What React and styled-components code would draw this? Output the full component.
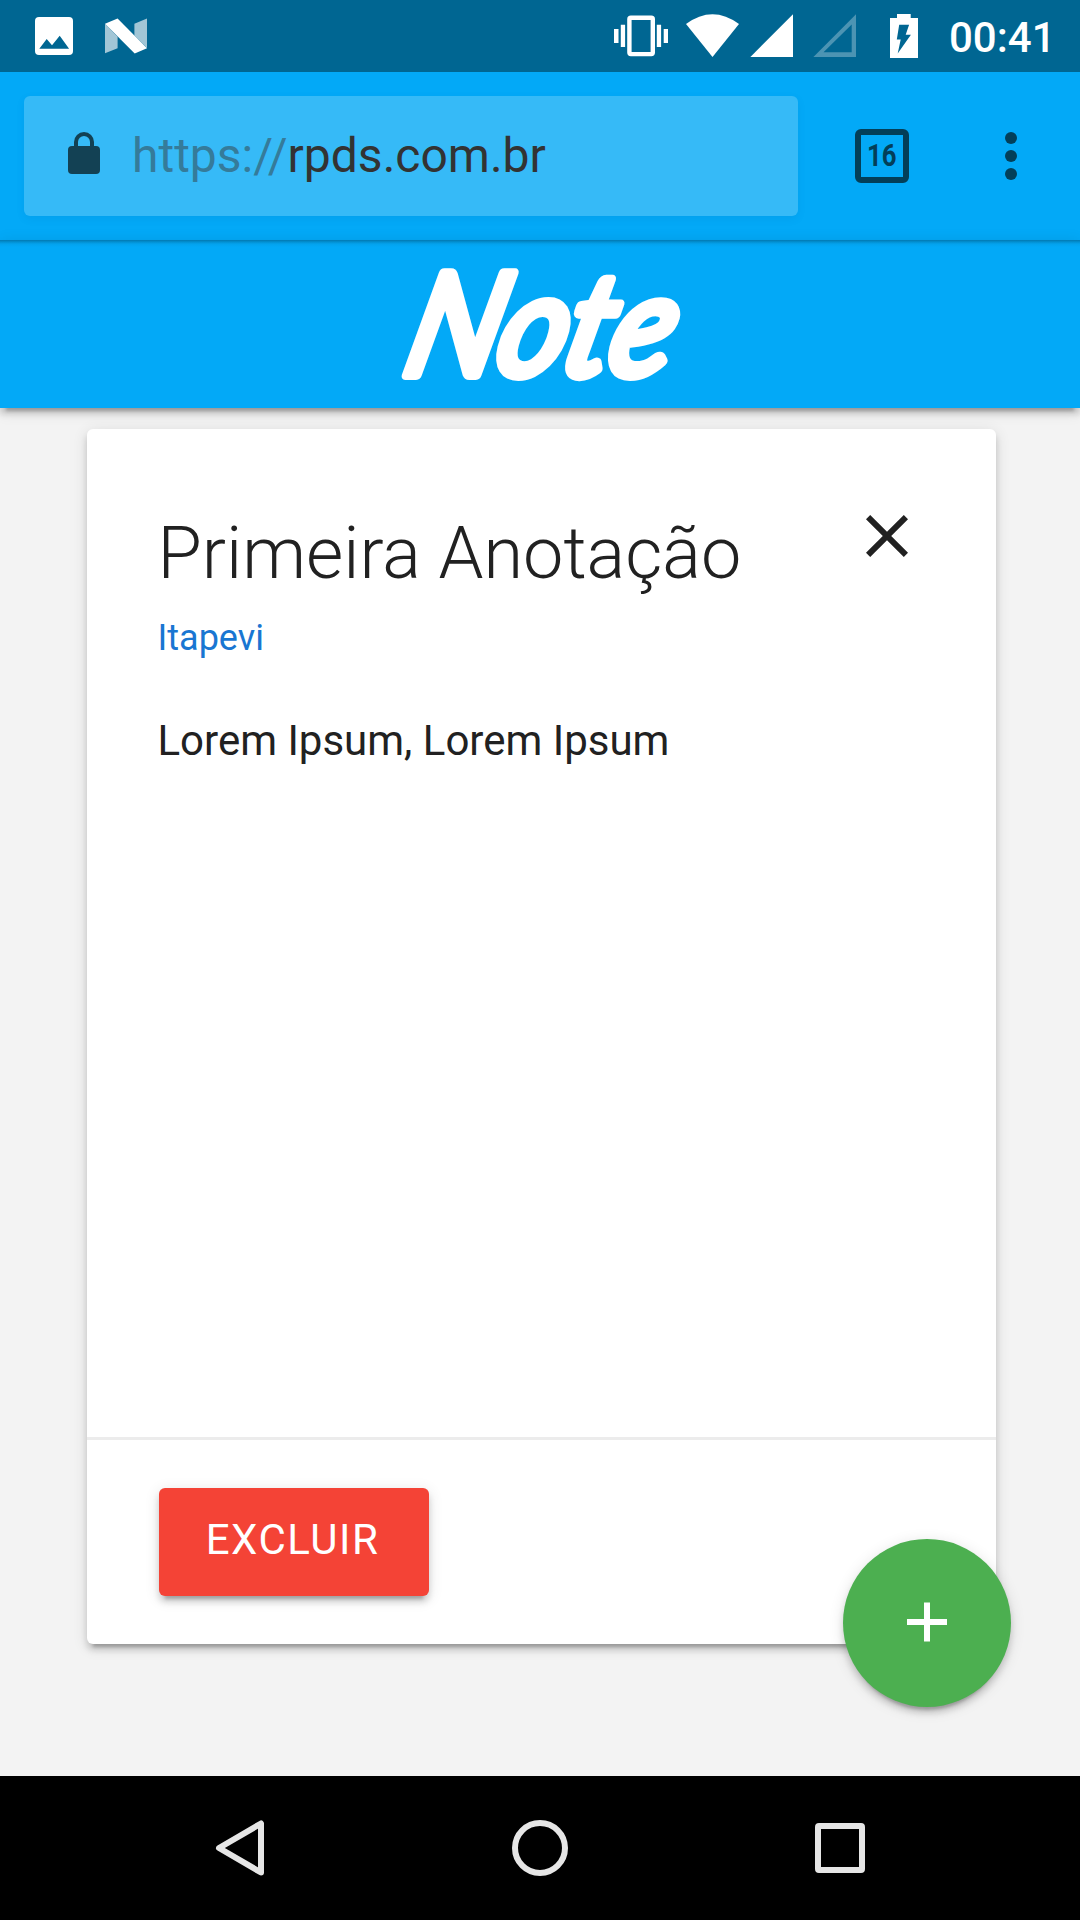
import React from "react";
import styled, { createGlobalStyle, css } from "styled-components";

const GlobalStyle = createGlobalStyle`
  *, *::before, *::after { box-sizing: border-box; }
  body { margin: 0; background: #f3f3f3; }
  h1, h2, p { margin: 0; }
  svg { display: block; flex: none; }
`;

const elevation = css`
  box-shadow: 0 6px 6px 0 rgba(0, 0, 0, 0.14), 0 3px 15px 0 rgba(0, 0, 0, 0.12),
    0 9px 3px -6px rgba(0, 0, 0, 0.2);
`;

const Screen = styled.div`
  position: relative;
  display: flex;
  flex-direction: column;
  width: 1080px;
  height: 1920px;
  overflow: hidden;
  background: #f3f3f3;
  color: #212121;
  font-family: Roboto, "Liberation Sans", sans-serif;
`;

const StatusBar = styled.div`
  display: flex;
  justify-content: space-between;
  height: 72px;
  padding: 0 27px 0 35px;
  background: #006692;
`;

const StatusGroup = styled.div`
  display: flex;
  align-items: center;
  gap: ${(p) => p.$gap}px;
`;

const Clock = styled.span`
  width: 104px;
  padding-top: 3px;
  margin-left: 13px;
  color: #fff;
  font-size: 42px;
  font-weight: 500;
  line-height: 72px;
  white-space: nowrap;
`;

const BrowserBar = styled.div`
  display: flex;
  align-items: center;
  height: 168px;
  padding: 0 63px 0 24px;
  background: #03a9f7;
`;

const AddressField = styled.div`
  display: flex;
  align-items: center;
  gap: 32px;
  width: 774px;
  height: 120px;
  padding-left: 44px;
  border-radius: 6px;
  background: #36baf7;
  box-shadow: 0 3px 8px rgba(0, 70, 130, 0.08);
`;

const Url = styled.span`
  color: #333;
  font-size: 48px;
  line-height: 56px;
  white-space: nowrap;
`;

const Scheme = styled.span`
  color: #357b9a;
`;

const TabCount = styled.div`
  display: flex;
  align-items: center;
  justify-content: center;
  width: 54px;
  height: 54px;
  margin: 0 96px 0 57px;
  border: 6px solid #033f59;
  border-radius: 6px;
  color: #033f59;
`;

const TabNumber = styled.span`
  font-size: 31px;
  font-weight: 700;
  line-height: 36px;
  transform: scaleX(0.83);
`;

const AppHeader = styled.header`
  position: relative;
  display: flex;
  align-items: center;
  justify-content: center;
  flex: none;
  height: 168px;
  background: linear-gradient(#0278b0 0, #0290d2 2px, #03a2ed 4px, #03a9f7 7px);
  ${elevation}
`;

const Brand = styled.svg`
  overflow: visible;
`;

const BrandText = styled.text`
  fill: #fff;
  stroke: #fff;
  stroke-width: 10px;
  stroke-linejoin: round;
  font-family: Lato, sans-serif;
  font-size: 142px;
  font-weight: 400;
  font-style: italic;
`;

const Main = styled.main`
  flex: 1;
  padding: 21px 84px 0 87px;
`;

const Card = styled.article`
  display: flex;
  flex-direction: column;
  height: 1215px;
  border-radius: 6px;
  background: #fff;
  ${elevation}
`;

const CardBody = styled.div`
  flex: 1;
  padding: 71px 73.5px 0 70.5px;
`;

const TitleRow = styled.div`
  display: flex;
  justify-content: space-between;
  height: 111px;
`;

const Title = styled.h2`
  padding-top: 12px;
  font-size: 72px;
  font-weight: 300;
  line-height: 84px;
  white-space: nowrap;
`;

const Place = styled.p`
  color: #1976d2;
  font-size: 36px;
  line-height: 54px;
`;

const NoteText = styled.p`
  margin-top: 44px;
  font-size: 42px;
  line-height: 63px;
`;

const CardActions = styled.footer`
  height: 207px;
  padding: 48px 72px;
  border-top: 3px solid #ececec;
`;

const DeleteButton = styled.button`
  display: block;
  width: 270px;
  height: 108px;
  padding: 0 3px 4px 0;
  border: 0;
  border-radius: 6px;
  background: #f44336;
  color: #fff;
  font: 400 42px/104px Roboto, sans-serif;
  letter-spacing: 1.5px;
  ${elevation}
`;

const AddButton = styled.button`
  position: absolute;
  right: 69px;
  bottom: 213px;
  display: flex;
  align-items: center;
  justify-content: center;
  width: 168px;
  height: 168px;
  padding: 0 0 2px;
  border: 0;
  border-radius: 50%;
  background: #4caf50;
  ${elevation}
`;

const NavBar = styled.nav`
  display: flex;
  align-items: center;
  justify-content: space-between;
  flex: none;
  height: 144px;
  padding: 0 215px;
  background: #000;
`;

const PhotoIcon = () => (
  <svg width="38" height="72" viewBox="35 0 38 72">
    <rect x="35" y="17" width="38" height="38" rx="4" fill="#fff" />
    <path d="M39.3 48.7l7.4-9.6 5.3 6.2 7.7-9.5 9.4 12.9z" fill="#006692" />
  </svg>
);

const NougatIcon = () => (
  <svg width="42" height="72" viewBox="105 0 42 72">
    <path d="M105 23.7l12.6 13v11.6L105 53.3zM134.4 23.8L147 18.4V48l-12.6-12.4z" fill="#a2c6d6" />
    <path d="M105 23.7l12.6-5.3L147 48.2l-12.3 5.3z" fill="#fff" />
  </svg>
);

const VibrateIcon = () => (
  <svg width="54" height="72" viewBox="614 0 54 72" fill="#fff">
    <path d="M614 29h4.5v14H614zM620.8 24.8h4.3V47h-4.3zM656.8 24.8h4.3V47h-4.3zM663.7 29h4.3v14h-4.3z" />
    <rect x="629.4" y="17.7" width="23.4" height="36.4" rx="1.5" fill="none" stroke="#fff" strokeWidth="4.4" />
  </svg>
);

const WifiIcon = () => (
  <svg width="53" height="72" viewBox="686 0 53 72">
    <path d="M686 24Q712.5 4.5 739 24L712.5 57z" fill="#fff" />
  </svg>
);

const SignalIcon = () => (
  <svg width="43" height="72" viewBox="750 0 43 72">
    <path d="M793 14.3V57h-42.6z" fill="#fff" />
  </svg>
);

const NoSignalIcon = () => (
  <svg width="43" height="72" viewBox="813 0 43 72">
    <path d="M856 14.3V57h-42.6zM851.7 24.4l-28.2 27.9h28.2z" fill="#4c94b3" fillRule="evenodd" />
  </svg>
);

const BatteryIcon = () => (
  <svg width="28" height="72" viewBox="890 0 28 72">
    <path d="M890 18h7v-4h13.700v4H918v40h-28z" fill="#fff" />
    <path d="M899.2 24.700h9.900L905.700 34.800h5.200L897.700 53.500l3-14.100h-3.900z" fill="#006692" />
  </svg>
);

const LockIcon = () => (
  <svg width="32" height="48" viewBox="0 0 32 48">
    <rect y="14" width="32" height="28" rx="4" fill="#134154" />
    <path d="M8 16v-6a8 8 0 0 1 16 0v6" fill="none" stroke="#134154" strokeWidth="4" />
  </svg>
);

const MenuIcon = () => (
  <svg width="12" height="48" viewBox="0 0 12 48" fill="#033f59">
    <circle cx="6" cy="6" r="6" />
    <circle cx="6" cy="24" r="6" />
    <circle cx="6" cy="42" r="6" />
  </svg>
);

const CloseIcon = () => (
  <svg width="72" height="72" viewBox="0 0 24 24" fill="#212121">
    <path d="M19 6.4L17.600 5 12 10.600 6.400 5 5 6.400 10.600 12 5 17.600 6.400 19 12 13.400 17.600 19 19 17.600 13.400 12z" />
  </svg>
);

const PlusIcon = () => (
  <svg width="40" height="40" viewBox="0 0 40 40" fill="#fff">
    <path d="M17 .5h6V17h17v6H23v16.500h-6V23H0v-6h17z" />
  </svg>
);

const navStroke = { fill: "none", stroke: "#e6e6e6", strokeWidth: 6, strokeLinejoin: "round" };

const BackIcon = () => (
  <svg width="50" height="56" viewBox="0 0 50 56" {...navStroke}>
    <path d="M46 3.500v49L4 28z" />
  </svg>
);

const HomeIcon = () => (
  <svg width="56" height="56" viewBox="0 0 56 56" {...navStroke}>
    <circle cx="28" cy="28" r="25" />
  </svg>
);

const RecentsIcon = () => (
  <svg width="50" height="50" viewBox="0 0 50 50" {...navStroke}>
    <rect x="3" y="3" width="44" height="44" rx="1" />
  </svg>
);

export default function App() {
  return (
    <Screen>
      <GlobalStyle />
      <StatusBar>
        <StatusGroup $gap={32}>
          <PhotoIcon />
          <NougatIcon />
        </StatusGroup>
        <StatusGroup $gap={34}>
          <StatusGroup $gap={11}>
            <StatusGroup $gap={18}>
              <VibrateIcon />
              <WifiIcon />
            </StatusGroup>
            <StatusGroup $gap={20}>
              <SignalIcon />
              <NoSignalIcon />
            </StatusGroup>
          </StatusGroup>
          <StatusGroup $gap={18}>
            <BatteryIcon />
            <Clock>00:41</Clock>
          </StatusGroup>
        </StatusGroup>
      </StatusBar>
      <BrowserBar>
        <AddressField>
          <LockIcon />
          <Url>
            <Scheme>https://</Scheme>rpds.com.br
          </Url>
        </AddressField>
        <TabCount>
          <TabNumber>16</TabNumber>
        </TabCount>
        <MenuIcon />
      </BrowserBar>
      <AppHeader>
        <Brand width="276" height="114" viewBox="0 0 276 114">
          <BrandText transform="translate(-2 108) skewX(-14)" textLength="266" lengthAdjust="spacingAndGlyphs">
            Note
          </BrandText>
        </Brand>
      </AppHeader>
      <Main>
        <Card>
          <CardBody>
            <TitleRow>
              <Title>Primeira Anotação</Title>
              <CloseIcon />
            </TitleRow>
            <Place>Itapevi</Place>
            <NoteText>Lorem Ipsum, Lorem Ipsum</NoteText>
          </CardBody>
          <CardActions>
            <DeleteButton>EXCLUIR</DeleteButton>
          </CardActions>
        </Card>
      </Main>
      <NavBar>
        <BackIcon />
        <HomeIcon />
        <RecentsIcon />
      </NavBar>
      <AddButton aria-label="Adicionar">
        <PlusIcon />
      </AddButton>
    </Screen>
  );
}
